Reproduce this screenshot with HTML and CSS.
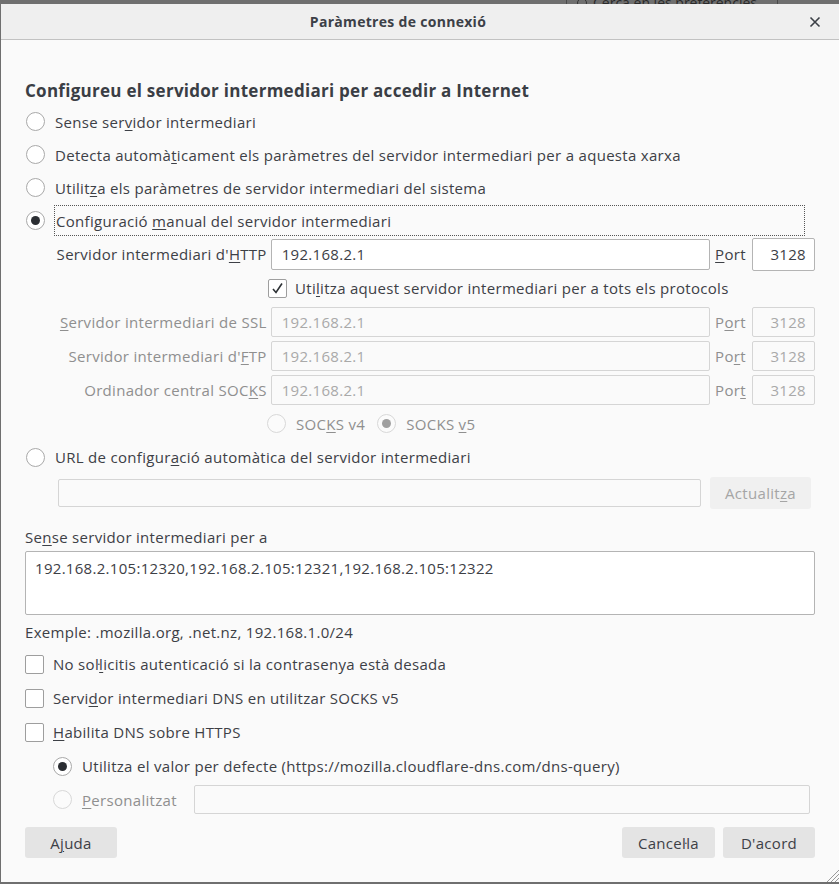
FILE: index.html
```html
<!DOCTYPE html>
<html lang="ca">
<head>
<meta charset="utf-8">
<title>Paràmetres de connexió</title>
<link rel="stylesheet" href="styles.css">
</head>
<body>
<div class="desk">
  <div class="search-peek"><span class="peek-icon"></span><span class="peek-text">Cerca en les preferències</span></div>
</div>
<div class="window">
  <div class="titlebar">
    <span class="title">Paràmetres de connexió</span>
    <svg class="close" width="12" height="12" viewBox="0 0 12 12"><path d="M1.5 1.5 L10.5 10.5 M10.5 1.5 L1.5 10.5" stroke="#3c4047" stroke-width="1.6" fill="none"/></svg>
  </div>
  <div class="content">
    <div class="heading">Configureu el servidor intermediari per accedir a Internet</div>

    <div class="row-radio"><span class="radio"></span><span>Sense ser<u>v</u>idor intermediari</span></div>
    <div class="row-radio"><span class="radio"></span><span>Detecta automà<u>t</u>icament els paràmetres del servidor intermediari per a aquesta xarxa</span></div>
    <div class="row-radio"><span class="radio"></span><span>Utilit<u>z</u>a els paràmetres de servidor intermediari del sistema</span></div>
    <div class="row-radio"><span class="radio checked"></span><span class="focus"><span>Configuració <u>m</u>anual del servidor intermediari</span></span></div>

    <div class="proxy-row first">
      <span class="plabel">Servidor intermediari d'<u>H</u>TTP</span>
      <span class="field host">192.168.2.1</span>
      <span class="port-label"><u>P</u>ort</span>
      <span class="field port tall">3128</span>
    </div>
    <div class="row-all">
      <span class="checkbox checked"><svg width="13" height="13" viewBox="0 0 13 13"><path d="M2 7 L5 10.5 L11 1.5" stroke="#2e3236" stroke-width="1.6" fill="none"/></svg></span>
      <span>Uti<u>l</u>itza aquest servidor intermediari per a tots els protocols</span>
    </div>
    <div class="proxy-row disabled">
      <span class="plabel"><u>S</u>ervidor intermediari de SSL</span>
      <span class="field host">192.168.2.1</span>
      <span class="port-label">P<u>o</u>rt</span>
      <span class="field port">3128</span>
    </div>
    <div class="proxy-row disabled">
      <span class="plabel">Servidor intermediari d'<u>F</u>TP</span>
      <span class="field host">192.168.2.1</span>
      <span class="port-label">Po<u>r</u>t</span>
      <span class="field port">3128</span>
    </div>
    <div class="proxy-row disabled">
      <span class="plabel">Ordinador central SOC<u>K</u>S</span>
      <span class="field host">192.168.2.1</span>
      <span class="port-label">Por<u>t</u></span>
      <span class="field port">3128</span>
    </div>
    <div class="row-socks disabled">
      <span class="radio dis"></span><span class="socks-l">SOC<u>K</u>S v4</span>
      <span class="radio dis checked"></span><span>SOCKS <u>v</u>5</span>
    </div>

    <div class="row-radio url"><span class="radio"></span><span>URL de configur<u>a</u>ció automàtica del servidor intermediari</span></div>
    <div class="row-url">
      <span class="field url-field"></span>
      <span class="button disabled-btn">Actualit<u>z</u>a</span>
    </div>

    <div class="label-row">Se<u>n</u>se servidor intermediari per a</div>
    <div class="textarea">192.168.2.105:12320,192.168.2.105:12321,192.168.2.105:12322</div>
    <div class="example">Exemple: .mozilla.org, .net.nz, 192.168.1.0/24</div>

    <div class="row-check"><span class="checkbox"></span><span>No sol·<u>l</u>icitis autenticació si la contrasenya està desada</span></div>
    <div class="row-check"><span class="checkbox"></span><span>Servi<u>d</u>or intermediari DNS en utilitzar SOCKS v5</span></div>
    <div class="row-check"><span class="checkbox"></span><span><u>H</u>abilita DNS sobre HTTPS</span></div>

    <div class="row-doh"><span class="radio checked"></span><span>Utilitza el valor per defecte (https://mozilla.cloudflare-dns.com/dns-query)</span></div>
    <div class="row-doh custom"><span class="radio dis"></span><span class="dis-text"><u>P</u>ersonalitzat</span><span class="field custom-field"></span></div>

    <div class="buttons">
      <span class="button">A<u>j</u>uda</span>
      <span class="spacer"></span>
      <span class="button">Cancel·la</span>
      <span class="button">D'acord</span>
    </div>
  </div>
  <svg class="grip" width="14" height="14" viewBox="0 0 14 14"><path d="M14 2 L2 14 M14 6 L6 14 M14 10 L10 14" stroke="#9a9a9a" stroke-width="1" fill="none"/></svg>
</div>
</body>
</html>
```
FILE: styles.css
```css
* { box-sizing: border-box; }
html, body { margin: 0; padding: 0; }
body {
  width: 839px;
  height: 884px;
  overflow: hidden;
  background: #6f6f6f;
  font-family: "Open Sans", "Noto Sans", sans-serif;
  font-size: 15px;
  letter-spacing: 0.3px;
  color: #3d4046;
}
u { text-decoration-thickness: 1px; text-underline-offset: 2px; }

.desk {
  height: 4px;
  overflow: hidden;
}
.search-peek {
  margin-left: 566px;
  width: 212px;
  height: 20px;
  border-left: 1px solid #4a4a4a;
  border-right: 1px solid #4a4a4a;
  color: #2a2a2a;
  font-size: 14px;
  letter-spacing: 0;
  line-height: 14px;
  padding-left: 10px;
  margin-top: -7px;
  display: flex;
  align-items: center;
  gap: 6px;
}
.peek-icon { width: 10px; height: 10px; border: 1px solid #333; border-radius: 50%; }
.peek-text { white-space: nowrap; }

.window {
  position: relative;
  margin-left: 1px;
  height: 878px;
  background: #fafafa;
}
.titlebar {
  height: 36px;
  background: #efefef;
  border-bottom: 1px solid #c2c2c2;
  display: flex;
  align-items: center;
  justify-content: center;
  padding-right: 44px;
  position: relative;
}
.title { font-weight: 700; font-size: 14px; letter-spacing: 0.3px; color: #3c4047; }
.close { position: absolute; right: 18px; top: 12px; }

.content { padding: 36px 24px 0 24px; }
.heading {
  height: 29px;
  display: flex;
  align-items: center;
  font-weight: 700;
  font-size: 17px;
  letter-spacing: 0.27px;
  color: #3a3e45;
}
.row-radio {
  height: 33px;
  display: flex;
  align-items: center;
  gap: 10px;
  padding-left: 1px;
}
.radio {
  width: 19px;
  height: 19px;
  flex: none;
  border-radius: 50%;
  border: 1px solid #a9a9a9;
  background: #fff;
  display: inline-flex;
  align-items: center;
  justify-content: center;
}
.radio.checked::after {
  content: "";
  width: 9px;
  height: 9px;
  border-radius: 50%;
  background: #2b2e33;
}
.radio.dis { border-color: #d8d8d8; background: #fbfbfb; }
.radio.dis.checked::after { background: #a0a0a0; }
.focus {
  flex: 1;
  margin-left: -1px;
  margin-right: 10px;
  padding-left: 1px;
  height: 31px;
  display: flex;
  align-items: center;
  border: 1px dotted #555;
}

.proxy-row {
  height: 34px;
  display: flex;
  align-items: center;
  padding-left: 29px;
}
.plabel {
  width: 213px;
  text-align: right;
  margin-right: 4px;
  white-space: nowrap;
}
.field {
  height: 30px;
  border: 1px solid #d5d5d5;
  border-radius: 2px;
  background: #fafafa;
  display: flex;
  align-items: center;
  padding: 0 10px;
  color: #a9a9a9;
}
.field.host { width: 440px; }
.port-label { width: 32px; margin: 0 5px; white-space: nowrap; }
.field.port { width: 63px; justify-content: flex-end; padding-right: 8px; }
.proxy-row.first .field { border-color: #b4b4b4; background: #fff; color: #3d4046; height: 31px; }
.proxy-row.first .field.tall { height: 33px; }
.disabled { color: #8f8f8f; }
.disabled .plabel { color: #8f8f8f; }

.row-all {
  height: 34px;
  display: flex;
  align-items: center;
  padding-left: 243px;
  gap: 8px;
}
.checkbox {
  width: 19px;
  height: 19px;
  flex: none;
  border: 1px solid #9e9e9e;
  border-radius: 2px;
  background: #fff;
  display: inline-flex;
  align-items: center;
  justify-content: center;
}
.row-socks {
  height: 33px;
  display: flex;
  align-items: center;
  padding-left: 242px;
  gap: 10px;
}
.socks-l { margin-right: 2px; }

.row-radio.url { height: 34px; }
.row-url {
  height: 38px;
  display: flex;
  align-items: center;
  padding-left: 33px;
  gap: 9px;
}
.field.url-field { width: 643px; height: 28px; background: #fafafa; }
.button {
  height: 31px;
  padding: 0 16px;
  border-radius: 3px;
  background: #e4e4e4;
  display: inline-flex;
  align-items: center;
  justify-content: center;
  color: #3d4046;
}
.disabled-btn { width: 101px; height: 32px; background: #f0f0f0; color: #a5a5a5; }

.label-row {
  margin-top: 10px;
  height: 29px;
  display: flex;
  align-items: center;
}
.textarea {
  height: 64px;
  border: 1px solid #b4b4b4;
  border-radius: 2px;
  background: #fff;
  padding: 4px 9px;
  line-height: 24px;
}
.example {
  margin-top: 2px;
  height: 30px;
  display: flex;
  align-items: center;
}
.row-check {
  height: 34px;
  display: flex;
  align-items: center;
  gap: 9px;
}
.row-doh {
  height: 34px;
  display: flex;
  align-items: center;
  padding-left: 28px;
  gap: 10px;
}
.row-doh.custom { height: 33px; }
.dis-text { color: #8f8f8f; width: 102px; white-space: nowrap; }
.field.custom-field { width: 616px; height: 29px; margin-left: 0; }

.buttons {
  margin-top: 11px;
  display: flex;
  gap: 8px;
}
.buttons .button { min-width: 92px; }
.spacer { flex: 1; }
.grip { position: absolute; right: 0; bottom: 0; }
```
